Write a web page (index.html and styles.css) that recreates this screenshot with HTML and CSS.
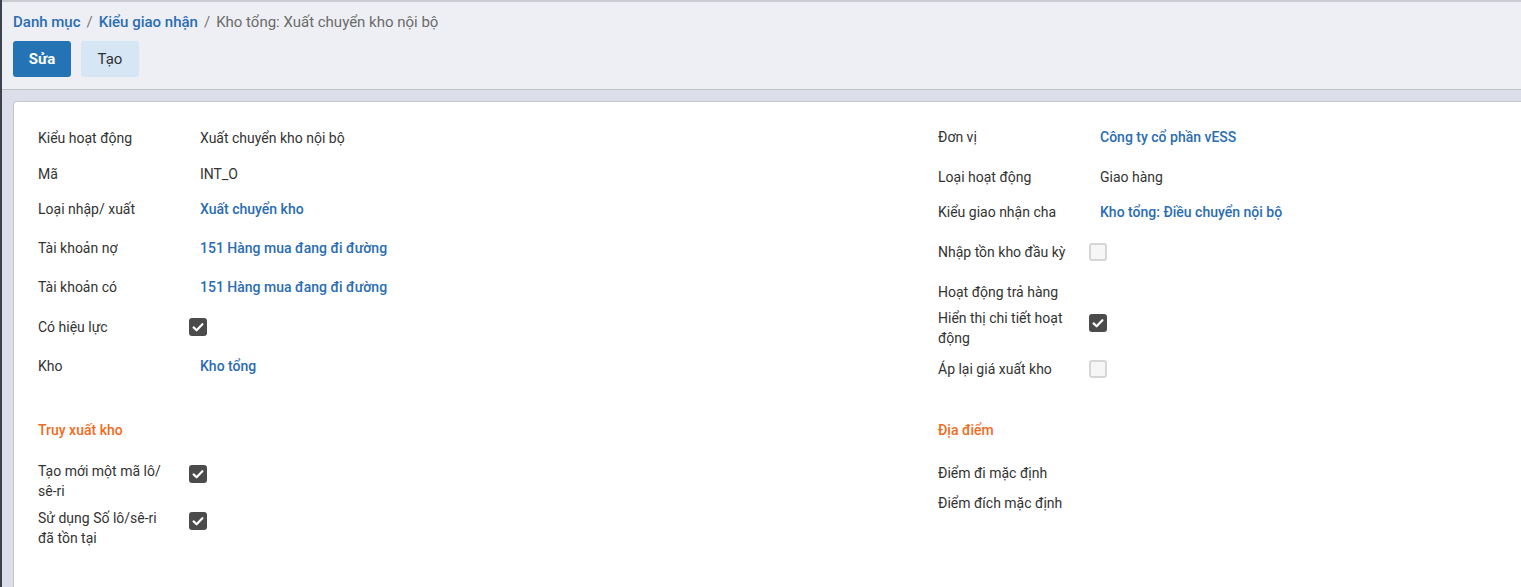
FILE: index.html
```html
<!DOCTYPE html>
<html lang="vi">
<head>
<meta charset="utf-8">
<title>Kho tổng: Xuất chuyển kho nội bộ</title>
<link rel="stylesheet" href="styles.css">
</head>
<body>
<div class="app">
  <div class="cp">
    <ol class="crumbs">
      <li class="crumb link">Danh mục</li>
      <li class="sep">/</li>
      <li class="crumb link">Kiểu giao nhận</li>
      <li class="sep">/</li>
      <li class="crumb active">Kho tổng: Xuất chuyển kho nội bộ</li>
    </ol>
    <div class="buttons">
      <button class="btn primary">Sửa</button>
      <button class="btn secondary">Tạo</button>
    </div>
  </div>
  <div class="content">
    <div class="sheet">
      <div class="groups">
        <div class="group left">
          <div class="field r-text"><div class="label"><span>Kiểu hoạt động</span></div><div class="value">Xuất chuyển kho nội bộ</div></div>
          <div class="field r-text"><div class="label"><span>Mã</span></div><div class="value">INT_O</div></div>
          <div class="field r-link"><div class="label"><span>Loại nhập/ xuất</span></div><div class="value link">Xuất chuyển kho</div></div>
          <div class="field r-link"><div class="label"><span>Tài khoản nợ</span></div><div class="value link">151 Hàng mua đang đi đường</div></div>
          <div class="field r-link"><div class="label"><span>Tài khoản có</span></div><div class="value link">151 Hàng mua đang đi đường</div></div>
          <div class="field r-check"><div class="label"><span>Có hiệu lực</span></div><div class="value"><span class="cb on"><svg viewBox="0 0 18 18" width="18" height="18"><path d="M4.6 9.4 L7.6 12.3 L13.4 6.2" fill="none" stroke="#fff" stroke-width="2.2" stroke-linecap="round" stroke-linejoin="round"/></svg></span></div></div>
          <div class="field r-link"><div class="label"><span>Kho</span></div><div class="value link">Kho tổng</div></div>
        </div>
        <div class="group right">
          <div class="field r-link"><div class="label"><span>Đơn vị</span></div><div class="value link">Công ty cổ phần vESS</div></div>
          <div class="field r-text"><div class="label"><span>Loại hoạt động</span></div><div class="value">Giao hàng</div></div>
          <div class="field r-link"><div class="label"><span>Kiểu giao nhận cha</span></div><div class="value link">Kho tổng: Điều chuyển nội bộ</div></div>
          <div class="field r-check"><div class="label"><span>Nhập tồn kho đầu kỳ</span></div><div class="value"><span class="cb off"></span></div></div>
          <div class="field r-text r-short"><div class="label"><span>Hoạt động trả hàng</span></div><div class="value"></div></div>
          <div class="field r-multi"><div class="label"><span>Hiển thị chi tiết hoạt động</span></div><div class="value"><span class="cb on"><svg viewBox="0 0 18 18" width="18" height="18"><path d="M4.6 9.4 L7.6 12.3 L13.4 6.2" fill="none" stroke="#fff" stroke-width="2.2" stroke-linecap="round" stroke-linejoin="round"/></svg></span></div></div>
          <div class="field r-check"><div class="label"><span>Áp lại giá xuất kho</span></div><div class="value"><span class="cb off"></span></div></div>
        </div>
      </div>
      <div class="groups second">
        <div class="group left">
          <div class="title">Truy xuất kho</div>
          <div class="field r-multi2 first"><div class="label"><span>Tạo mới một mã lô/ sê-ri</span></div><div class="value"><span class="cb on"><svg viewBox="0 0 18 18" width="18" height="18"><path d="M4.6 9.4 L7.6 12.3 L13.4 6.2" fill="none" stroke="#fff" stroke-width="2.2" stroke-linecap="round" stroke-linejoin="round"/></svg></span></div></div>
          <div class="field r-multi2"><div class="label"><span>Sử dụng Số lô/sê-ri đã tồn tại</span></div><div class="value"><span class="cb on"><svg viewBox="0 0 18 18" width="18" height="18"><path d="M4.6 9.4 L7.6 12.3 L13.4 6.2" fill="none" stroke="#fff" stroke-width="2.2" stroke-linecap="round" stroke-linejoin="round"/></svg></span></div></div>
        </div>
        <div class="group right">
          <div class="title">Địa điểm</div>
          <div class="field r-empty"><div class="label"><span>Điểm đi mặc định</span></div><div class="value"></div></div>
          <div class="field r-empty"><div class="label"><span>Điểm đích mặc định</span></div><div class="value"></div></div>
        </div>
      </div>
    </div>
  </div>
</div>
</body>
</html>
```

FILE: styles.css
```css
* { box-sizing: border-box; }
html, body { margin: 0; padding: 0; height: 100%; }
body {
  font-family: Roboto, "Noto Sans", "Liberation Sans", sans-serif;
  font-size: 14px;
  color: #333333;
  background: #dcdeea;
  overflow: hidden;
}
.app {
  min-height: 100%;
  border-left: 2px solid #3b414d;
  display: flex;
  flex-direction: column;
}
.cp {
  background: #eeeff4;
  border-top: 2px solid #cacad2;
  border-bottom: 1px solid #c2c2cb;
  padding: 10px 11px 12px;
}
.crumbs {
  list-style: none;
  margin: 0;
  padding: 0;
  display: flex;
  gap: 6px;
  font-size: 15px;
  line-height: 20px;
}
.crumb.link { color: #2a6db3; font-weight: 500; }
.crumb.active { color: #6b6b6b; }
.sep { color: #777; }
.buttons {
  margin-top: 9px;
  display: flex;
  gap: 10px;
}
.btn {
  font-family: inherit;
  font-size: 15px;
  height: 36px;
  width: 58px;
  border: none;
  border-radius: 3px;
  padding: 0;
}
.btn.primary { background: #2474b5; color: #fff; font-weight: 700; }
.btn.secondary { background: #d6e6f4; color: #333; }
.content {
  flex: 1;
  padding: 11px 0 0 11px;
  display: flex;
}
.sheet {
  flex: 1;
  background: #fff;
  border-top: 1px solid #c6c6ce;
  border-left: 1px solid #c6c6ce;
  border-top-left-radius: 4px;
  padding: 18px 0 0 24px;
}
.groups {
  display: grid;
  grid-template-columns: 900px 1fr;
}
.groups.second { margin-top: 29px; }
.field {
  display: flex;
  align-items: flex-start;
  line-height: 20px;
}
.label { width: 162px; flex: none; }
.label span { display: block; max-width: 138px; }
.value { color: #333; }
.value.link { color: #2a6db3; font-weight: 500; }
.r-text { padding: 8px 0; }
.r-short { padding: 8px 0 6px; }
.r-link { padding: 7px 0 12px; }
.r-check { padding: 8px 0 12px; }
.r-multi { padding: 0 0 3px; }
.r-multi .cb { margin-top: 6px; }
.r-multi2 { padding: 4px 0 3px; }
.r-multi2.first { padding-top: 3px; }
.r-multi2 .cb { margin-top: 4px; }
.r-empty { padding: 5px 0; }
.r-check .cb { margin-top: 1px; }
.cb {
  display: block;
  width: 18px;
  height: 18px;
  margin-left: -11px;
  border-radius: 3px;
}
.cb svg { display: block; }
.cb.on { background: #4b4b4b; }
.cb.off { background: #f6f6f6; border: 2px solid #d6d6d6; }
.title {
  color: #f26b1d;
  font-weight: 500;
  line-height: 20px;
  margin-bottom: 18px;
}
```
